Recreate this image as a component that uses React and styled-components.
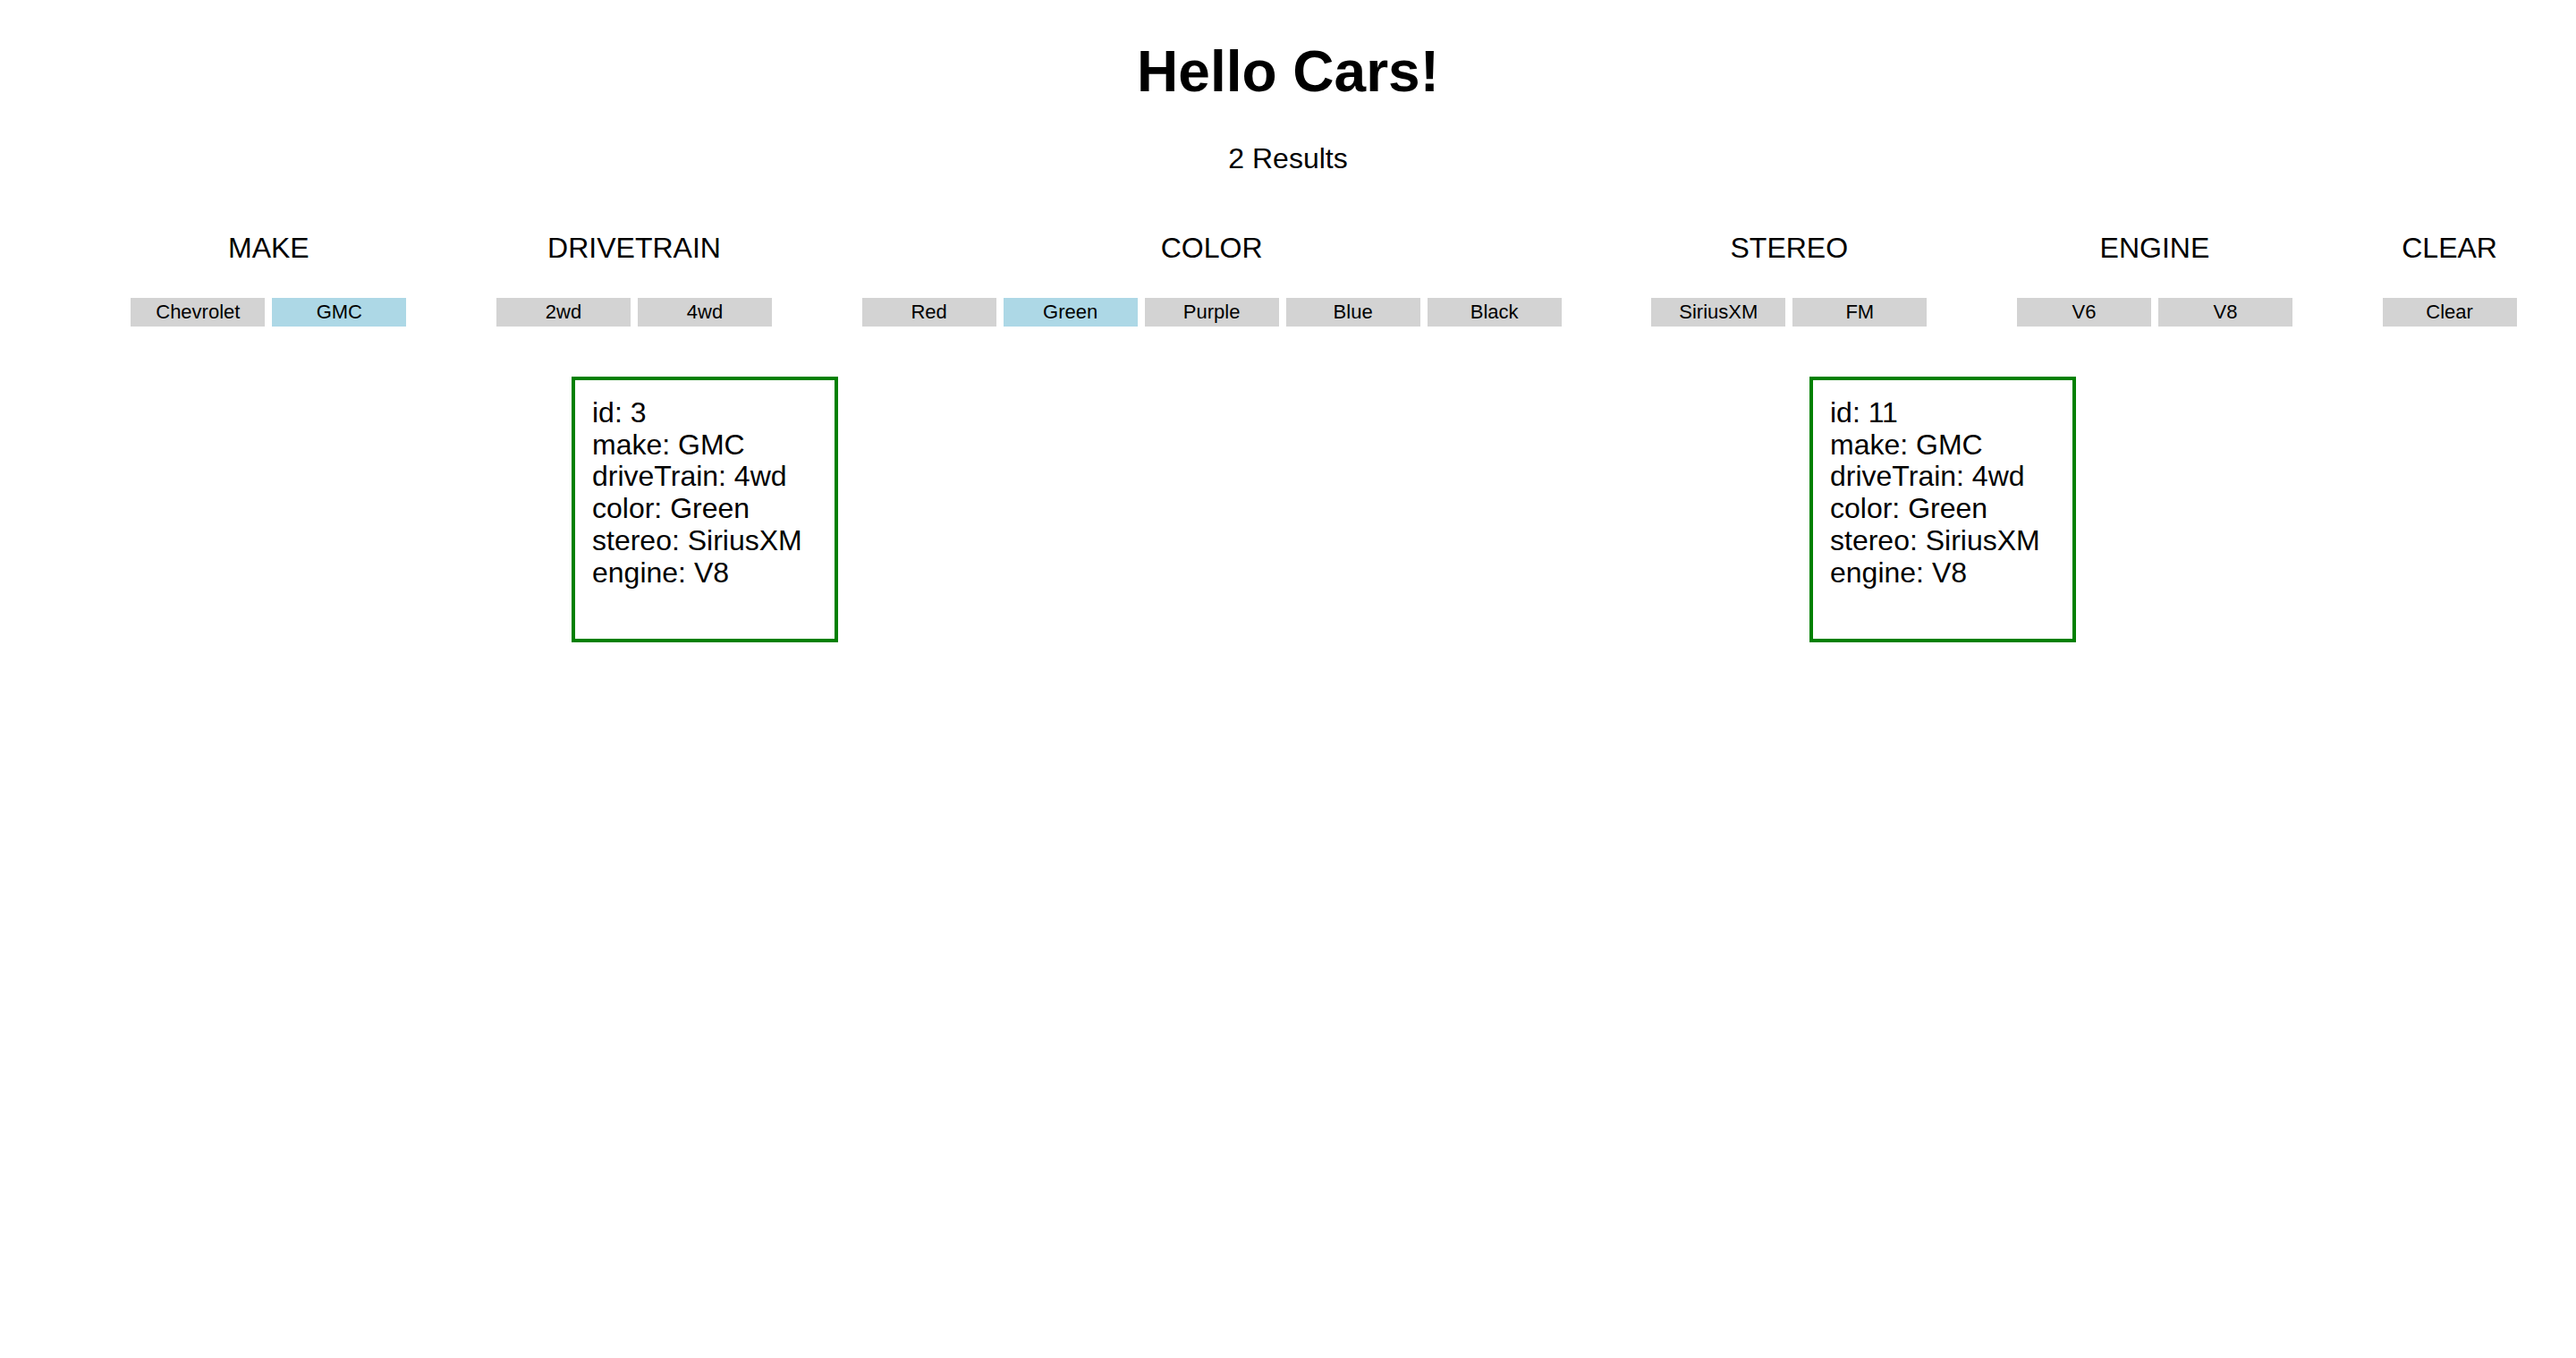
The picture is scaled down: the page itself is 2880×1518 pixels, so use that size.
import React from 'react';
import styled, { createGlobalStyle } from 'styled-components';

const GlobalStyle = createGlobalStyle`
  html, body {
    margin: 0;
    padding: 0;
    background: #fff;
  }
  body {
    font-family: 'Liberation Sans', Arial, Helvetica, sans-serif;
    color: #000;
  }
`;

const Page = styled.div`
  padding: 0 16px;
  text-align: center;
`;

const Title = styled.h1`
  margin: 43px 0 0;
  font-size: 64px;
  line-height: 74px;
  font-weight: 700;
`;

const Count = styled.div`
  margin-top: 42px;
  font-size: 32px;
  line-height: 37px;
`;

const FilterList = styled.ul`
  display: flex;
  justify-content: space-around;
  align-items: flex-start;
  list-style: none;
  margin: 63px 0 0;
  padding: 0 0 0 80px;
`;

const FilterGroup = styled.li`
  display: flex;
  flex-direction: column;
  align-items: center;
`;

const GroupLabel = styled.div`
  font-size: 32px;
  line-height: 37px;
`;

const Buttons = styled.div`
  display: flex;
  gap: 8px;
  margin-top: 37px;
`;

const FilterButton = styled.button`
  width: 150px;
  height: 32px;
  padding: 0;
  border: none;
  border-radius: 0;
  background: ${(p) => (p.$active ? '#add8e6' : '#d3d3d3')};
  color: #000;
  font-family: 'Liberation Sans', Arial, Helvetica, sans-serif;
  font-size: 22px;
  line-height: 32px;
  cursor: pointer;
`;

const CarList = styled.ul`
  display: flex;
  justify-content: space-around;
  align-items: flex-start;
  list-style: none;
  margin: 56px 0 0;
  padding: 0 0 0 80px;
`;

const CarCard = styled.li`
  box-sizing: border-box;
  width: 298px;
  height: 297px;
  border: 4px solid #008000;
  padding: 19px;
  text-align: left;
  font-size: 32px;
  line-height: 35.7px;
`;

const filters = [
  { label: 'MAKE', options: ['Chevrolet', 'GMC'], active: 'GMC' },
  { label: 'DRIVETRAIN', options: ['2wd', '4wd'] },
  { label: 'COLOR', options: ['Red', 'Green', 'Purple', 'Blue', 'Black'], active: 'Green' },
  { label: 'STEREO', options: ['SiriusXM', 'FM'] },
  { label: 'ENGINE', options: ['V6', 'V8'] },
  { label: 'CLEAR', options: ['Clear'] },
];

const cars = [
  { id: 3, make: 'GMC', driveTrain: '4wd', color: 'Green', stereo: 'SiriusXM', engine: 'V8' },
  { id: 11, make: 'GMC', driveTrain: '4wd', color: 'Green', stereo: 'SiriusXM', engine: 'V8' },
];

export default function App() {
  return (
    <Page>
      <GlobalStyle />
      <Title>Hello Cars!</Title>
      <Count>{cars.length} Results</Count>
      <FilterList>
        {filters.map((group) => (
          <FilterGroup key={group.label}>
            <GroupLabel>{group.label}</GroupLabel>
            <Buttons>
              {group.options.map((opt) => (
                <FilterButton key={opt} $active={group.active === opt}>
                  {opt}
                </FilterButton>
              ))}
            </Buttons>
          </FilterGroup>
        ))}
      </FilterList>
      <CarList>
        {cars.map((car) => (
          <CarCard key={car.id}>
            {Object.entries(car).map(([key, value]) => (
              <div key={key}>
                {key}: {value}
              </div>
            ))}
          </CarCard>
        ))}
      </CarList>
    </Page>
  );
}
